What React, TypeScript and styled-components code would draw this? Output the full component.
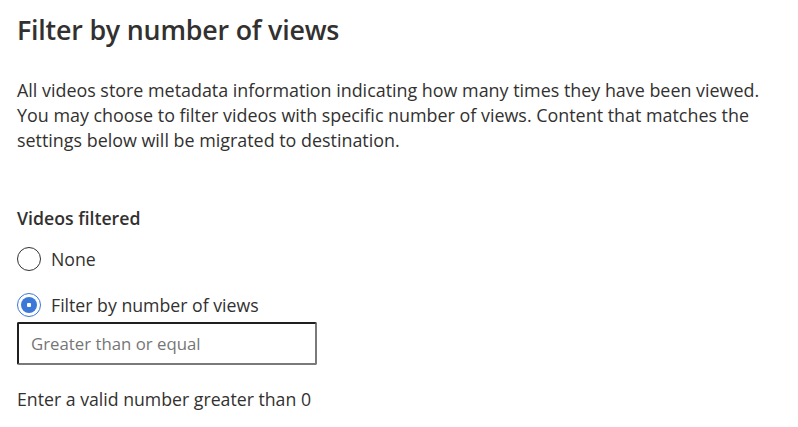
import styled, { createGlobalStyle } from 'styled-components'

const GlobalStyle = createGlobalStyle`
	body {
		margin: 0;
		background: #ffffff;
		font-family: "Open Sans", "Noto Sans", sans-serif;
		color: #323130;
	}
`

const Page = styled.div`
	padding: 14px 17px;
	display: flex;
	flex-direction: column;
`
const Title = styled.h2`
	margin: 0;
	font-size: 26.8px;
	line-height: 32px;
	font-weight: 600;
	color: #323130;
	letter-spacing: -0.2px;
`
const Description = styled.p`
	margin: 32px 0 0;
	font-size: 17.9px;
	line-height: 25px;
	color: #323130;
`
const Label = styled.div`
	margin-top: 53px;
	font-size: 17.7px;
	line-height: 24px;
	font-weight: 600;
`
const Options = styled.div`
	margin-top: 17px;
	display: flex;
	flex-direction: column;
	gap: 22px;
`
const Option = styled.label`
	display: flex;
	align-items: center;
	gap: 10px;
	font-size: 17.7px;
	line-height: 24px;
	cursor: pointer;
`
const Circle = styled.span<{ checked?: boolean }>`
	box-sizing: border-box;
	width: 24px;
	height: 24px;
	border-radius: 50%;
	border: 1px solid ${(p) => (p.checked ? '#3b78d8' : '#323130')};
	display: flex;
	align-items: center;
	justify-content: center;
	&::after {
		content: '';
		display: ${(p) => (p.checked ? 'block' : 'none')};
		width: 16px;
		height: 16px;
		border-radius: 50%;
		background: radial-gradient(circle, #ffffff 0 2px, #3b78d8 2.5px);
	}
`
const Input = styled.input`
	box-sizing: border-box;
	margin-top: 5px;
	width: 300px;
	height: 43px;
	padding: 0 12px;
	border: 2px solid;
	border-color: #1f1f1f #7a7a7a #7a7a7a #1f1f1f;
	border-radius: 2px;
	font-family: inherit;
	font-size: 16.8px;
	color: #323130;
	outline: none;
	&::placeholder {
		color: #767676;
	}
`
const Helper = styled.div`
	margin-top: 22px;
	font-size: 17.7px;
	line-height: 24px;
`

export default function App() {
	return (
		<Page>
			<GlobalStyle />
			<Title>Filter by number of views</Title>
			<Description>
				All videos store metadata information indicating how many times they have been viewed.
				<br />
				You may choose to filter videos with specific number of views. Content that matches the
				<br />
				settings below will be migrated to destination.
			</Description>
			<Label>Videos filtered</Label>
			<Options>
				<Option>
					<Circle />
					None
				</Option>
				<Option>
					<Circle checked />
					Filter by number of views
				</Option>
			</Options>
			<Input placeholder='Greater than or equal' />
			<Helper>Enter a valid number greater than 0</Helper>
		</Page>
	)
}
